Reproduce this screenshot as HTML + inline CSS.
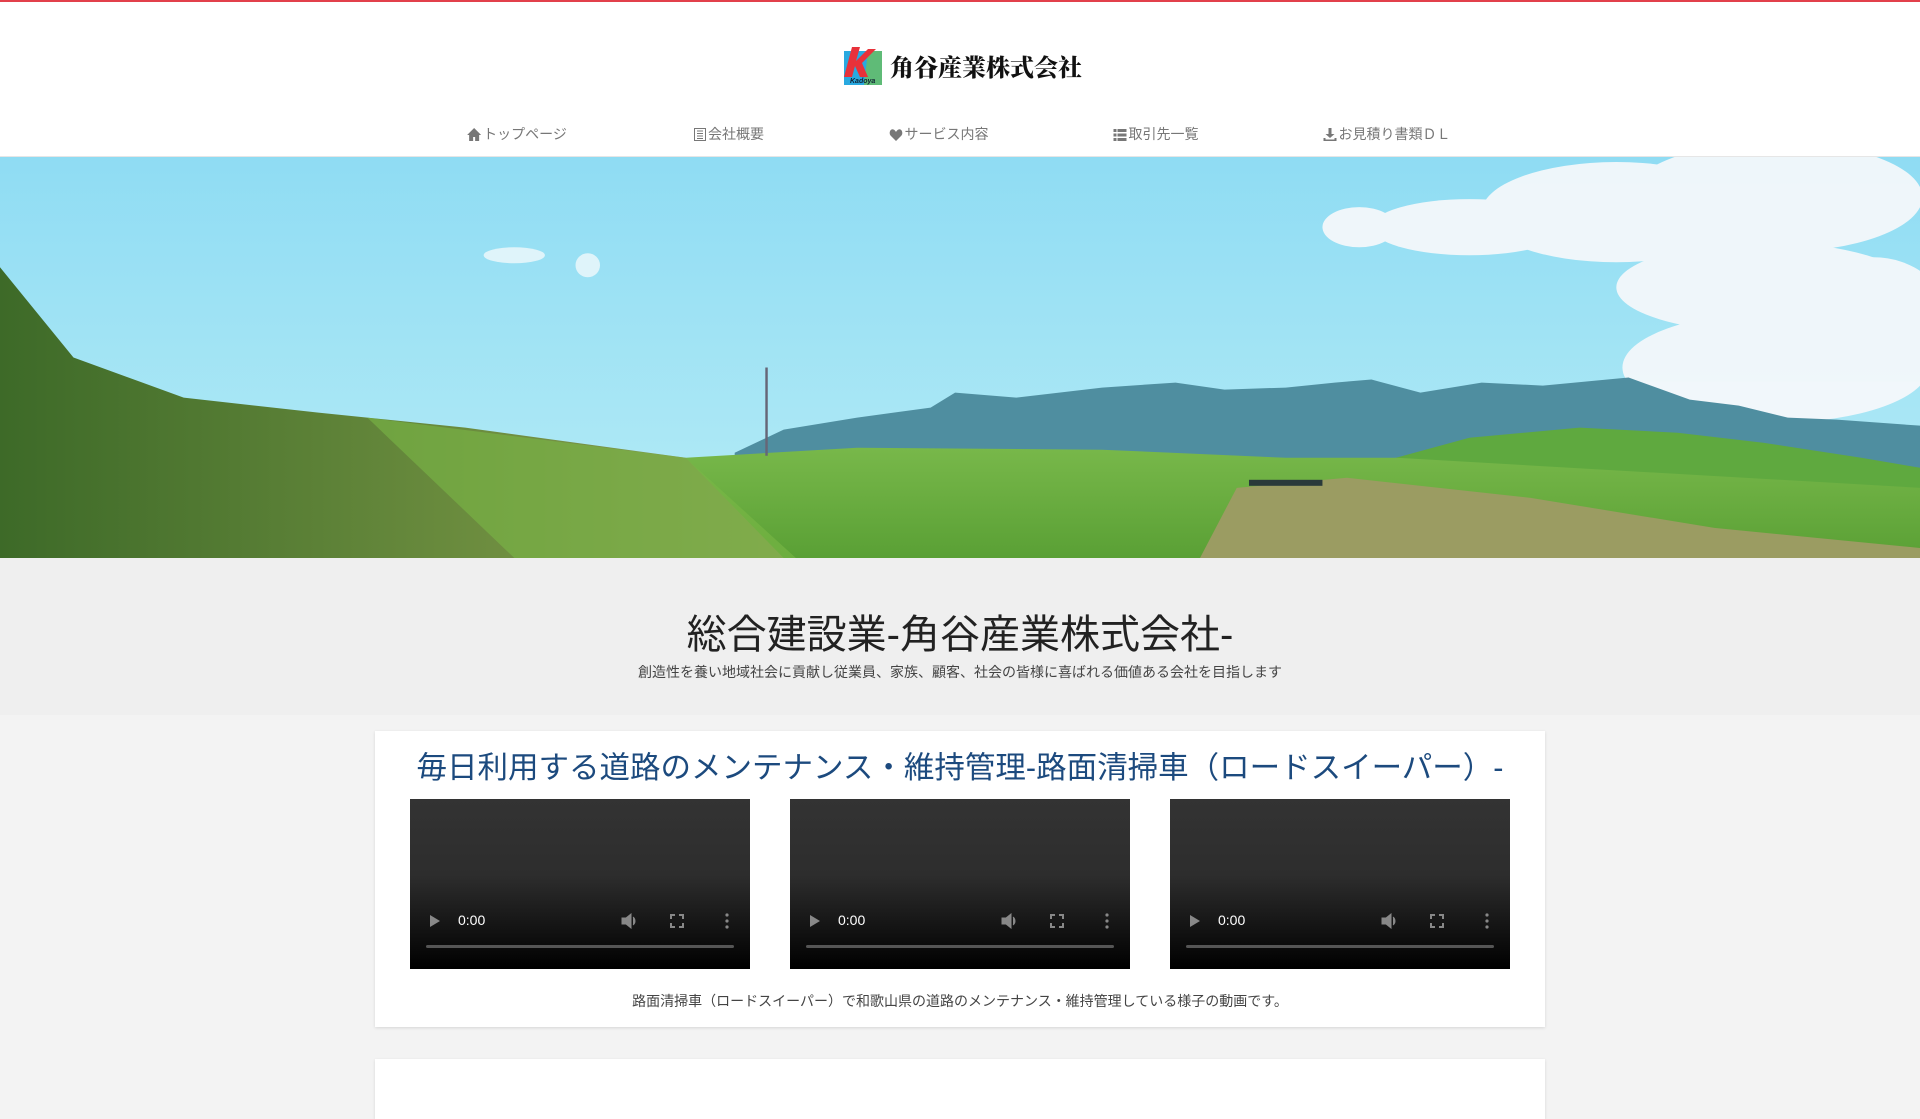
<!DOCTYPE html>
<html><head><meta charset="utf-8"><style>
*{margin:0;padding:0;box-sizing:border-box}
body{width:1920px;height:1080px;overflow:hidden;background:#f3f3f3;font-family:"Liberation Sans","Noto Sans CJK JP",sans-serif}
.top{height:157px;background:#fff;border-top:2px solid #e2404b;position:relative;border-bottom:1px solid #e6e6e6}
.logo{position:absolute;left:842px;top:43px;display:flex;align-items:center}
.logo .t{font-family:"Noto Serif CJK SC",serif;font-weight:900;font-size:24px;color:#111;margin-left:6px}
.nav a{position:absolute;top:122px;font-size:14px;color:#777;text-decoration:none;transform:translateX(-50%);white-space:nowrap}
.nav svg{vertical-align:-2px;margin-right:2px}
.hero{height:401px;position:relative;overflow:hidden}
.band{height:157px;background:#efefef;text-align:center;padding-top:52px}
.band h1{font-weight:400;font-size:40px;color:#222;line-height:50px}
.band p{font-size:14px;color:#444;margin-top:2px}
.card{position:absolute;left:375px;width:1170px;background:#fff;box-shadow:0 1px 3px rgba(0,0,0,.12)}
.card h2{font-weight:400;font-size:30.5px;color:#1c4a7e;text-align:center;position:absolute;top:12px;width:100%}
.vid{position:absolute;top:68px;width:340px;height:170px;background:linear-gradient(#333 0%,#2d2d2d 45%,#000 100%)}
.vid .tm{position:absolute;left:48px;top:113px;color:#fff;font-size:14px}
.vid .bar{position:absolute;left:16px;right:16px;top:146px;height:3px;border-radius:2px;background:#555}
.vid svg{position:absolute}
.cap{position:absolute;top:260px;width:100%;text-align:center;font-size:14px;color:#444}
</style></head><body>
<div class="top">
 <div class="logo">
  <svg width="42" height="40" viewBox="0 0 42 40"><rect x="2" y="6" width="38" height="34" fill="#29a9e0"/><polygon points="26,6 40,6 40,40 22,40" fill="#5fbb77"/><path d="M10 2 L18 2 L14 16 L26 4 L34 4 L20 18 L26 32 L18 32 L13 21 L10 32 L2 32 Z" fill="#e8313a"/><text x="8" y="38" font-size="7" font-style="italic" font-weight="bold" fill="#123">Kadoya</text></svg>
  <span class="t">角谷産業株式会社</span>
 </div>
 <div class="nav">
  <a style="left:517px"><svg width="14" height="13" viewBox="0 0 14 13"><path d="M7 0L0 7h2v6h4V9h2v4h4V7h2z" fill="#777"/></svg>トップページ</a>
  <a style="left:729px"><svg width="12" height="13" viewBox="0 0 12 13"><rect x=".5" y=".5" width="11" height="12" fill="none" stroke="#777"/><path d="M3 3h6M3 5.5h6M3 8h6M3 10.5h6" stroke="#777"/></svg>会社概要</a>
  <a style="left:939px"><svg width="13" height="12" viewBox="0 0 13 12"><path d="M6.5 12L1 6.5C-1 4 1-1 4 .5 5.5 1 6.5 3 6.5 3S7.5 1 9 .5C12-1 14 4 12 6.5z" fill="#777"/></svg>サービス内容</a>
  <a style="left:1156px"><svg width="13" height="12" viewBox="0 0 13 12"><path d="M0 0h3v3H0zM4 0h9v3H4zM0 4.5h3v3H0zM4 4.5h9v3H4zM0 9h3v3H0zM4 9h9v3H4z" fill="#777"/></svg>取引先一覧</a>
  <a style="left:1387px"><svg width="13" height="13" viewBox="0 0 13 13"><path d="M5 0h3v6h3L6.5 10 2 6h3z M0 10h2v1.5h9V10h2v3H0z" fill="#777"/></svg>お見積り書類ＤＬ</a>
 </div>
</div>
<div class="hero">
<svg width="1920" height="401" viewBox="0 0 1568 400" preserveAspectRatio="none">
<defs>
<linearGradient id="sky" x1="0" y1="0" x2="0" y2="1"><stop offset="0" stop-color="#8fdcf3"/><stop offset="1" stop-color="#b6ecf6"/></linearGradient>
<linearGradient id="g1" x1="0" y1="0" x2="0" y2="1"><stop offset="0" stop-color="#78b84a"/><stop offset="1" stop-color="#5aa035"/></linearGradient>
<linearGradient id="hill" x1="0" y1="0" x2="1" y2="0"><stop offset="0" stop-color="#3d6a28"/><stop offset=".6" stop-color="#6b8c3e"/><stop offset="1" stop-color="#8b9a55"/></linearGradient>
</defs>
<rect width="1568" height="400" fill="url(#sky)"/>
<g fill="#f4f8fb" opacity=".95">
<ellipse cx="1320" cy="55" rx="110" ry="50"/><ellipse cx="1450" cy="40" rx="120" ry="55"/><ellipse cx="1200" cy="70" rx="80" ry="28"/><ellipse cx="1110" cy="70" rx="30" ry="20"/>
<ellipse cx="1440" cy="130" rx="120" ry="45"/><ellipse cx="1450" cy="210" rx="125" ry="55"/><ellipse cx="1530" cy="160" rx="60" ry="60"/>
</g>
<ellipse cx="420" cy="98" rx="25" ry="8" fill="#dff4fa"/><ellipse cx="480" cy="108" rx="10" ry="12" fill="#dff4fa"/>
<path d="M600 295 L640 272 L700 260 L760 250 L780 235 L830 240 L900 230 L960 225 L1000 232 L1050 230 L1090 225 L1120 222 L1160 235 L1210 225 L1260 228 L1330 220 L1380 242 L1420 248 L1460 260 L1500 262 L1568 268 L1568 320 L600 320Z" fill="#4f8ea0"/>
<path d="M1140 300 L1200 280 L1290 270 L1370 275 L1440 285 L1520 300 L1568 310 L1568 400 L1140 400Z" fill="#5fa93f"/>
<path d="M560 300 L700 290 L900 292 L1050 300 L1140 300 L1568 330 L1568 400 L560 400Z" fill="url(#g1)"/>
<path d="M980 400 L1010 330 L1100 320 L1250 340 L1400 370 L1568 390 L1568 400Z" fill="#9b9c62"/>
<path d="M0 110 L20 140 L60 200 L150 240 L260 255 L380 270 L560 300 L640 400 L0 400Z" fill="url(#hill)"/>
<path d="M300 260 L560 300 L650 400 L420 400 Z" fill="#7ab846" opacity=".6"/>
<path d="M626 210 L626 298" stroke="#667" stroke-width="2"/>
<rect x="1020" y="322" width="60" height="6" fill="#2a3a3a"/>
</svg>
</div>
<div class="band"><h1>総合建設業-角谷産業株式会社-</h1><p>創造性を養い地域社会に貢献し従業員、家族、顧客、社会の皆様に喜ばれる価値ある会社を目指します</p></div>
<div class="card" style="top:731px;height:296px">
 <h2>毎日利用する道路のメンテナンス・維持管理-路面清掃車（ロードスイーパー）-</h2>
 <div class="vid" style="left:35px"><svg style="left:20px;top:116px" width="10" height="12"><path d="M0 0L10 6L0 12z" fill="#888"/></svg><span class="tm">0:00</span><svg style="left:211px;top:114px" width="16" height="16" viewBox="0 0 16 16"><path d="M1 5h4l5-4v14l-5-4H1z M12 4a5 5 0 0 1 0 8" fill="#888" stroke="#888"/></svg><svg style="left:260px;top:115px" width="14" height="14" viewBox="0 0 14 14"><path d="M1 5V1h4M9 1h4v4M13 9v4H9M5 13H1V9" fill="none" stroke="#888" stroke-width="2"/></svg><svg style="left:315px;top:114px" width="4" height="16"><circle cx="2" cy="2" r="1.6" fill="#888"/><circle cx="2" cy="8" r="1.6" fill="#888"/><circle cx="2" cy="14" r="1.6" fill="#888"/></svg><div class="bar"></div></div>
 <div class="vid" style="left:415px"><svg style="left:20px;top:116px" width="10" height="12"><path d="M0 0L10 6L0 12z" fill="#888"/></svg><span class="tm">0:00</span><svg style="left:211px;top:114px" width="16" height="16" viewBox="0 0 16 16"><path d="M1 5h4l5-4v14l-5-4H1z M12 4a5 5 0 0 1 0 8" fill="#888" stroke="#888"/></svg><svg style="left:260px;top:115px" width="14" height="14" viewBox="0 0 14 14"><path d="M1 5V1h4M9 1h4v4M13 9v4H9M5 13H1V9" fill="none" stroke="#888" stroke-width="2"/></svg><svg style="left:315px;top:114px" width="4" height="16"><circle cx="2" cy="2" r="1.6" fill="#888"/><circle cx="2" cy="8" r="1.6" fill="#888"/><circle cx="2" cy="14" r="1.6" fill="#888"/></svg><div class="bar"></div></div>
 <div class="vid" style="left:795px"><svg style="left:20px;top:116px" width="10" height="12"><path d="M0 0L10 6L0 12z" fill="#888"/></svg><span class="tm">0:00</span><svg style="left:211px;top:114px" width="16" height="16" viewBox="0 0 16 16"><path d="M1 5h4l5-4v14l-5-4H1z M12 4a5 5 0 0 1 0 8" fill="#888" stroke="#888"/></svg><svg style="left:260px;top:115px" width="14" height="14" viewBox="0 0 14 14"><path d="M1 5V1h4M9 1h4v4M13 9v4H9M5 13H1V9" fill="none" stroke="#888" stroke-width="2"/></svg><svg style="left:315px;top:114px" width="4" height="16"><circle cx="2" cy="2" r="1.6" fill="#888"/><circle cx="2" cy="8" r="1.6" fill="#888"/><circle cx="2" cy="14" r="1.6" fill="#888"/></svg><div class="bar"></div></div>
 <div class="cap">路面清掃車（ロードスイーパー）で和歌山県の道路のメンテナンス・維持管理している様子の動画です。</div>
</div>
<div class="card" style="top:1059px;height:60px"></div>
</body></html>
